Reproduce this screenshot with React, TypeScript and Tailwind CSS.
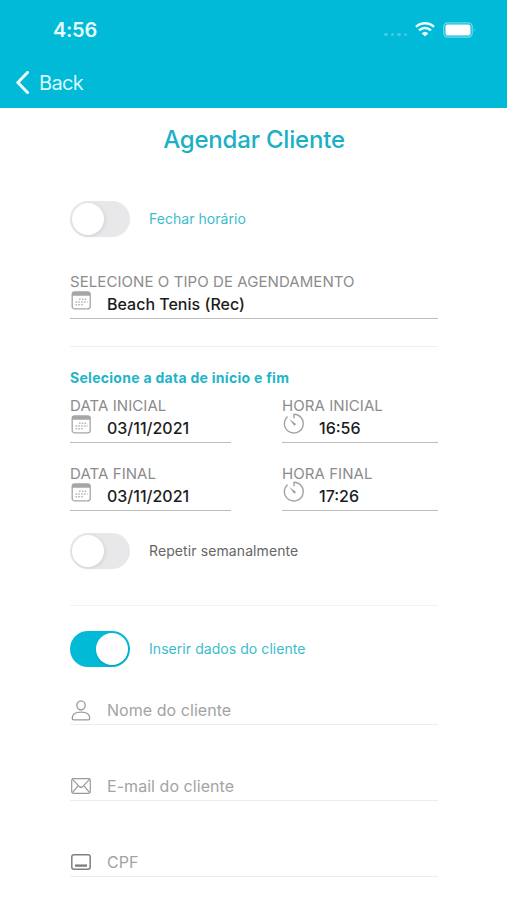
import { ReactNode } from "react";
import clsx from "clsx";

function CalendarIcon() {
  return (
    <svg width="20" height="19" viewBox="0 0 20 19" fill="none">
      <rect x="1.2" y="0.8" width="18" height="17" rx="2.4" stroke="#a6a6a6" strokeWidth="1.3" />
      <path d="M1 4.8V2.6Q1 1 2.8 1h14.6Q19.2 1 19.2 2.6v2.2z" fill="#a6a6a6" />
      <path
        d="M8 8.2h8.5M4.5 11h12M4.5 13.8h8.5"
        stroke="#b8b8b8"
        strokeWidth="1.4"
        strokeDasharray="1.6 1.2"
      />
    </svg>
  );
}

function TimerIcon() {
  return (
    <svg width="22" height="22" viewBox="0 0 22 22" fill="none" stroke="#a3a3a3" strokeWidth="1.4">
      <path
        d="M4.2 3.9A9.4 9.4 0 1 0 11 1.2v3.6"
        strokeLinecap="round"
        strokeLinejoin="round"
      />
      <path d="M6.2 6l6.2 4.4a1.1 1.1 0 0 1-1.6 1.6z" fill="#999999" stroke="none" />
    </svg>
  );
}

function PersonIcon() {
  return (
    <svg width="20" height="21" viewBox="0 0 20 21" fill="none" stroke="#999999" strokeWidth="1.3">
      <ellipse cx="10" cy="5.3" rx="4.2" ry="4.5" />
      <path d="M1.2 18.2c0-4 3.7-6 8.8-6s8.8 2 8.8 6c0 1-.6 1.6-1.6 1.6H2.8c-1 0-1.6-.6-1.6-1.6z" />
    </svg>
  );
}

function MailIcon() {
  return (
    <svg width="20" height="16" viewBox="0 0 20 16" fill="none" stroke="#999999" strokeWidth="1.2">
      <rect x="0.7" y="0.7" width="18.6" height="14.6" rx="1.8" />
      <path d="M1.2 1.2l7.4 7.6q1.4 1.3 2.8 0l7.4-7.6M1.2 14.8l6-7.2M18.8 14.8l-6-7.2" />
    </svg>
  );
}

function CardIcon() {
  return (
    <svg width="20" height="16" viewBox="0 0 20 16" fill="none" stroke="#7c8084">
      <rect x="0.8" y="0.8" width="18.4" height="14.4" rx="2.2" strokeWidth="1.5" />
      <path d="M4 11.6h12" strokeWidth="2.4" />
    </svg>
  );
}

function Switch({ on = false }: { on?: boolean }) {
  return (
    <div
      className={clsx(
        "flex h-9 w-[60px] items-center rounded-full px-0.5",
        on ? "justify-end bg-[#00bad6]" : "bg-[#e8e8ea]"
      )}
    >
      <div
        className={clsx(
          "size-8 rounded-full bg-white",
          on ? "shadow-[0_1px_2px_rgba(0,0,0,0.15)]" : "shadow-[1px_1px_4px_rgba(0,0,0,0.1)]"
        )}
      />
    </div>
  );
}

function SwitchRow({ on, className, children }: { on?: boolean; className: string; children: ReactNode }) {
  return (
    <div className="flex items-center gap-[19px]">
      <Switch on={on} />
      <span className={clsx("text-sm", className)}>{children}</span>
    </div>
  );
}

type FieldProps = {
  label: string;
  value: string;
  icon: ReactNode;
};

function Field({ label, value, icon }: FieldProps) {
  return (
    <div className="border-b border-[#bdbdbd]">
      <div className="h-[18px] text-[15px] leading-[18px] tracking-[0.07px] whitespace-nowrap text-[#8c8c8c]">
        {label}
      </div>
      <div className="flex h-[27px]">
        <div className="flex h-[18px] w-[37px] items-center pl-px">{icon}</div>
        <div className="text-base leading-[26px] font-[450] text-[#1c1c1c]">{value}</div>
      </div>
    </div>
  );
}

function TextInput({ placeholder, icon }: { placeholder: string; icon: ReactNode }) {
  return (
    <div className="flex h-[29px] items-center border-b border-[#ededed]">
      <div className="w-[37px] pl-px">{icon}</div>
      <span className="text-base leading-7 tracking-[0.05px] text-[#a3a3a3]">{placeholder}</span>
    </div>
  );
}

export default function App() {
  return (
    <div className="h-[900px] w-[507px] overflow-hidden bg-white font-['Inter',sans-serif]">
      <header className="h-[108px] bg-[#00bad8] text-white">
        <div className="flex h-[59px] items-center justify-between pr-[31px] pl-[53px]">
          <span className="text-xl font-semibold tracking-[-0.3px] text-[#e6fbff]">4:56</span>
          <div className="flex items-center">
            <div className="mt-[10px] mr-2 flex gap-[3px]">
              <i className="size-[3.5px] rounded-full bg-[#40cce0]" />
              <i className="size-[3.5px] rounded-full bg-[#40cce0]" />
              <i className="size-[3.5px] rounded-full bg-[#40cce0]" />
              <i className="size-[3.5px] rounded-full bg-[#40cce0]" />
            </div>
            <svg width="20" height="15" viewBox="0 0 20 15" fill="none" stroke="#effcff" strokeWidth="2.5">
              <path d="M1 4.9a13 13 0 0 1 18 0M4.1 8.3a8.5 8.5 0 0 1 11.8 0" />
              <path d="M6.7 11.3a4.8 4.8 0 0 1 6.6 0L10 14.6z" fill="#effcff" stroke="none" />
            </svg>
            <svg className="ml-2" width="33" height="16" viewBox="0 0 33 16" fill="none">
              <rect x="0.8" y="0.8" width="28.4" height="14.4" rx="4" stroke="#70dbea" strokeWidth="1.2" />
              <rect x="2.5" y="2.5" width="25" height="11" rx="2" fill="#fff" />
              <path d="M30.8 5.6q1.6 2.4 0 4.8z" fill="#70dbea" />
            </svg>
          </div>
        </div>
        <div className="flex h-[47px] items-center pl-[15px]">
          <svg width="15" height="23" viewBox="0 0 15 23" fill="none" stroke="#f0fdff" strokeWidth="3">
            <path d="M12.5 1.5L2.8 11.5l9.7 10" strokeLinecap="round" strokeLinejoin="round" />
          </svg>
          <span className="ml-[9px] text-xl tracking-[-0.7px] text-[#d9f8fd]">Back</span>
        </div>
      </header>

      <main className="pt-4 pr-[69px] pl-[70px]">
        <h1 className="text-center text-2xl leading-8 font-[550] tracking-[-0.2px] text-[#1bb0c6]">
          Agendar Cliente
        </h1>

        <div className="mt-[45px]">
          <SwitchRow className="tracking-[0.04px] text-[#3bbccd]">Fechar horário</SwitchRow>
        </div>

        <div className="mt-9">
          <Field label="SELECIONE O TIPO DE AGENDAMENTO" value="Beach Tenis (Rec)" icon={<CalendarIcon />} />
        </div>

        <hr className="mt-[27px] border-[#f0f0f0]" />

        <h2 className="mt-[22px] text-sm leading-[18px] font-bold tracking-[0.28px] text-[#1fb4c8]">
          Selecione a data de início e fim
        </h2>

        <div className="mt-[10px] grid grid-cols-[161px_156px] justify-between gap-y-[22px]">
          <Field label="DATA INICIAL" value="03/11/2021" icon={<CalendarIcon />} />
          <Field label="HORA INICIAL" value="16:56" icon={<TimerIcon />} />
          <Field label="DATA FINAL" value="03/11/2021" icon={<CalendarIcon />} />
          <Field label="HORA FINAL" value="17:26" icon={<TimerIcon />} />
        </div>

        <div className="mt-[22px]">
          <SwitchRow className="tracking-[0.1px] text-[#666666]">Repetir semanalmente</SwitchRow>
        </div>

        <hr className="mt-9 border-[#f2f2f2]" />

        <div className="mt-[25px]">
          <SwitchRow on className="tracking-[0.06px] text-[#3bbccd]">
            Inserir dados do cliente
          </SwitchRow>
        </div>

        <div className="mt-[29px] flex flex-col gap-[47px]">
          <TextInput placeholder="Nome do cliente" icon={<PersonIcon />} />
          <TextInput placeholder="E-mail do cliente" icon={<MailIcon />} />
          <TextInput placeholder="CPF" icon={<CardIcon />} />
        </div>
      </main>
    </div>
  );
}
